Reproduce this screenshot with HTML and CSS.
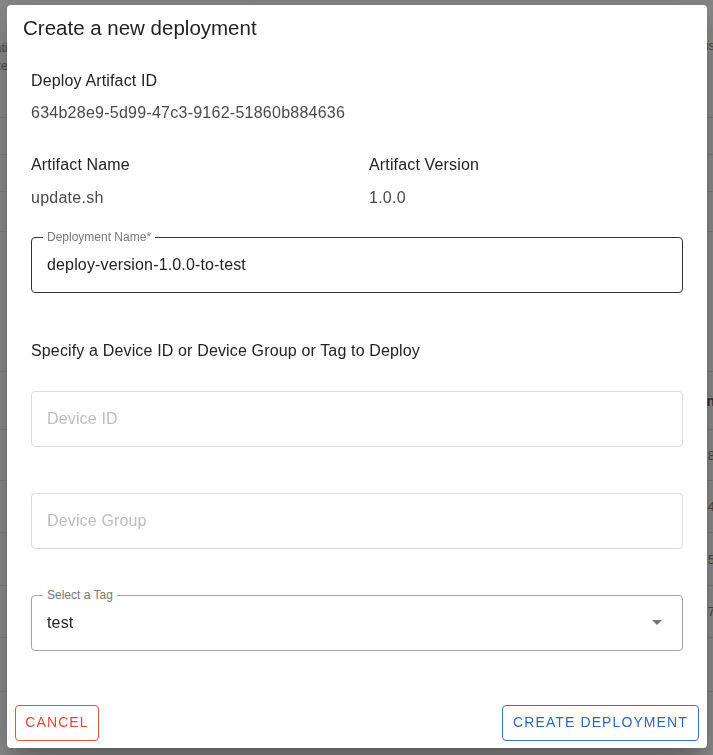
FILE: index.html
```html
<!DOCTYPE html>
<html lang="en">
<head>
<meta charset="utf-8">
<title>Create a new deployment</title>
<link rel="stylesheet" href="styles.css">
</head>
<body>
<div class="page">
  <div class="bg-head">
    <div class="bg-edge bg-left"><span>Creati</span><span>Date</span></div>
    <div class="bg-edge bg-right"><span>Status</span></div>
  </div>
  <div class="bg-row h37"></div>
  <div class="bg-row h37"></div>
  <div class="bg-row h40"></div>
  <div class="bg-row h140"></div>
  <div class="bg-row h58"><div class="bg-edge bg-right"><b>Version</b></div></div>
  <div class="bg-row h51"><div class="bg-edge bg-right"><span>1.0.8</span></div></div>
  <div class="bg-row h52"><div class="bg-edge bg-right"><span>1.0.4</span></div></div>
  <div class="bg-row h53"><div class="bg-edge bg-right"><span>1.0.5</span></div></div>
  <div class="bg-row h52"><div class="bg-edge bg-right"><span>1.0.7</span></div></div>
  <div class="bg-row h54"></div>
</div>

<div class="dialog" role="dialog">
  <h2 class="dialog-title">Create a new deployment</h2>
  <div class="dialog-content">
    <div class="label first">Deploy Artifact ID</div>
    <div class="value">634b28e9-5d99-47c3-9162-51860b884636</div>

    <div class="two-col">
      <div class="col col-a">
        <div class="label">Artifact Name</div>
        <div class="value">update.sh</div>
      </div>
      <div class="col col-b">
        <div class="label">Artifact Version</div>
        <div class="value">1.0.0</div>
      </div>
    </div>

    <div class="field field-dark">
      <span class="field-label">Deployment Name*</span>
      <span class="field-value">deploy-version-1.0.0-to-test</span>
    </div>

    <div class="section-text">Specify a Device ID or Device Group or Tag to Deploy</div>

    <div class="field field-light">
      <span class="field-placeholder">Device ID</span>
    </div>

    <div class="field field-light field-gap">
      <span class="field-placeholder">Device Group</span>
    </div>

    <div class="field field-mid field-gap">
      <span class="field-label">Select a Tag</span>
      <span class="field-value">test</span>
      <svg class="arrow" width="24" height="24" viewBox="0 0 24 24" aria-hidden="true"><path d="M7 10l5 5 5-5z" fill="#757575"/></svg>
    </div>
  </div>
  <div class="dialog-actions">
    <button class="btn btn-cancel" type="button">CANCEL</button>
    <button class="btn btn-create" type="button">CREATE DEPLOYMENT</button>
  </div>
</div>
</body>
</html>
```

FILE: styles.css
```css
* { box-sizing: border-box; }
html, body { margin: 0; padding: 0; }
body {
  width: 713px;
  height: 755px;
  overflow: hidden;
  background: #8d8d8d;
  font-family: "Liberation Sans", Arial, Helvetica, sans-serif;
}

/* background page (dimmed) */
.page {
  width: 713px;
  height: 755px;
  background: linear-gradient(#878787, #8e8e8e 40px);
}
.bg-head {
  height: 118px;
  border-bottom: 1px solid #7e7e7e;
  position: relative;
}
.bg-row {
  border-bottom: 1px solid #808080;
  position: relative;
}
.h37 { height: 37px; }
.h40 { height: 40px; }
.h140 { height: 140px; }
.h58 { height: 58px; }
.h51 { height: 51px; }
.h52 { height: 52px; }
.h53 { height: 53px; }
.h54 { height: 54px; }

.bg-edge {
  position: absolute;
  top: 0;
  width: 8px;
  height: 100%;
  overflow: hidden;
  display: flex;
  flex-direction: column;
  align-items: flex-end;
  font-size: 13px;
  color: #4a4a4a;
  white-space: nowrap;
}
.bg-left {
  left: 0;
  padding-top: 39px;
  line-height: 18px;
}
.bg-right {
  right: 0;
  width: 6px;
  justify-content: center;
}
.bg-right span, .bg-right b { margin-right: -2px; }
.bg-head .bg-right { justify-content: flex-start; padding-top: 38px; }
.bg-right b { font-size: 14px; color: #333; }

/* dialog */
.dialog {
  position: fixed;
  left: 7px;
  top: 5px;
  width: 700px;
  height: 743px;
  background: #fff;
  border-radius: 4px;
  display: flex;
  flex-direction: column;
  box-shadow: 0 11px 15px -7px rgba(0,0,0,0.2), 0 24px 38px 3px rgba(0,0,0,0.14), 0 9px 46px 8px rgba(0,0,0,0.12);
}
.dialog-title {
  margin: 0;
  padding: 11px 16px 0;
  font-size: 20.5px;
  font-weight: 400;
  line-height: 24px;
  color: #222;
}
.dialog-content {
  flex: 1;
  padding: 29px 24px 0;
  display: flex;
  flex-direction: column;
  letter-spacing: 0.15px;
}
.label {
  font-size: 16px;
  line-height: 24px;
  color: #222;
}
.value {
  font-size: 16px;
  line-height: 24px;
  color: #4a4a4a;
  margin-top: 8px;
  letter-spacing: 0.25px;
}
.two-col {
  display: flex;
  margin-top: 28px;
}
.two-col .value { margin-top: 9px; }
.col-a { flex: 0 0 338px; }
.col-b { flex: 1 1 auto; }

.field {
  position: relative;
  height: 56px;
  border-radius: 4px;
  display: flex;
  align-items: center;
  padding: 0 15px;
  font-size: 16px;
}
.field-dark {
  border: 1px solid #333;
  margin-top: 27px;
}
.field-light {
  border: 1px solid #dcdcdc;
  margin-top: 28px;
}
.field-mid {
  border: 1px solid #a3a3a3;
}
.field-gap { margin-top: 46px; }
.field-label {
  position: absolute;
  top: -8px;
  left: 11px;
  padding: 0 4px;
  background: #fff;
  font-size: 12px;
  line-height: 14px;
  color: #777;
  letter-spacing: 0;
}
.field-value { color: #222; }
.field-placeholder { color: #bdbdbd; }
.arrow {
  position: absolute;
  right: 13px;
  top: 14px;
}
.section-text {
  margin-top: 46px;
  font-size: 16px;
  line-height: 24px;
  color: #222;
}

.dialog-actions {
  display: flex;
  justify-content: space-between;
  padding: 0 8px 7px;
}
.btn {
  height: 36px;
  background: #fff;
  border-radius: 4px;
  font-family: "Liberation Sans", Arial, Helvetica, sans-serif;
  font-size: 14px;
  letter-spacing: 1.1px;
  padding: 0 0 3px;
  white-space: nowrap;
  text-align: center;
  cursor: pointer;
}
.btn-cancel {
  width: 84px;
  color: #e0483a;
  border: 1px solid #e0533f;
}
.btn-create {
  width: 197px;
  color: #2c68bf;
  border: 1px solid #3a72c6;
}
```
